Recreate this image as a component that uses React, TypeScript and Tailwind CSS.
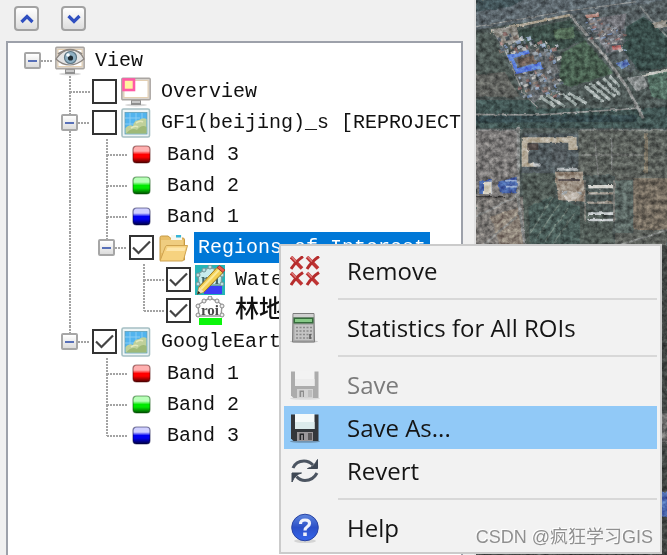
import React, { useState } from 'react';
import clsx from 'clsx';

type IconName = 'view' | 'overview' | 'raster' | 'red' | 'green' | 'blue' | 'folder' | 'roiEdit' | 'roi';

interface TreeNode {
  id: string;
  label: string;
  icon: IconName;
  checked?: boolean;
  selected?: boolean;
  children?: TreeNode[];
}

const tree: TreeNode = {
  id: 'view',
  label: 'View',
  icon: 'view',
  children: [
    { id: 'overview', label: 'Overview', icon: 'overview', checked: false },
    {
      id: 'gf1',
      label: 'GF1(beijing)_s [REPROJECTED]',
      icon: 'raster',
      checked: false,
      children: [
        { id: 'gf1-b3', label: 'Band 3', icon: 'red' },
        { id: 'gf1-b2', label: 'Band 2', icon: 'green' },
        { id: 'gf1-b1', label: 'Band 1', icon: 'blue' },
        {
          id: 'regions',
          label: 'Regions of Interest',
          icon: 'folder',
          checked: true,
          selected: true,
          children: [
            { id: 'water', label: 'Water', icon: 'roiEdit', checked: true },
            { id: 'forest', label: '林地', icon: 'roi', checked: true },
          ],
        },
      ],
    },
    {
      id: 'google',
      label: 'GoogleEarth',
      icon: 'raster',
      checked: true,
      children: [
        { id: 'ge-b1', label: 'Band 1', icon: 'red' },
        { id: 'ge-b2', label: 'Band 2', icon: 'green' },
        { id: 'ge-b3', label: 'Band 3', icon: 'blue' },
      ],
    },
  ],
};

const vDots = 'w-0.5 bg-[repeating-linear-gradient(to_bottom,#a3a3a3_0_2px,transparent_2px_3px)]';
const hDots = 'h-0.5 bg-[repeating-linear-gradient(to_right,#a3a3a3_0_2px,transparent_2px_3px)]';

const bandColors = {
  red: ['#ffb0b0', '#ff0000', '#4a0000'],
  green: ['#b8ffb8', '#00e800', '#004a00'],
  blue: ['#d0d0ff', '#0000f0', '#00003c'],
};

const BandIcon: React.FC<{ color: 'red' | 'green' | 'blue' }> = ({ color }) => {
  const [light, mid, dark] = bandColors[color];
  return (
    <svg className="ml-[3px] size-[19px]" viewBox="0 0 19 19">
      <defs>
        <linearGradient id={`band-${color}`} x1="0" y1="0" x2="0" y2="1">
          <stop offset="0" stopColor={light} />
          <stop offset="0.3" stopColor={light} />
          <stop offset="0.5" stopColor={mid} />
          <stop offset="0.65" stopColor={mid} />
          <stop offset="1" stopColor={dark} />
        </linearGradient>
      </defs>
      <rect x="1" y="1" width="17" height="17" rx="3.5" fill={`url(#band-${color})`} stroke={dark} strokeOpacity="0.5" strokeWidth="1.2" />
    </svg>
  );
};

const Monitor: React.FC<{ children: React.ReactNode }> = ({ children }) => (
  <svg className="size-[30px]" viewBox="0 0 30 30">
    <ellipse cx="15" cy="28" rx="11" ry="1.5" fill="#d8d8d8" />
    <rect x="10" y="22" width="10" height="6" fill="#8f8f8f" />
    <rect x="11" y="24" width="8" height="2" fill="#c9c9c9" />
    <rect x="0.8" y="1.3" width="28.4" height="21.4" rx="1" fill="#d9d3cc" stroke="#a9a5a1" strokeWidth="1.4" />
    <rect x="3" y="3.5" width="24" height="17" fill="#fff" stroke="#e3cfb2" />
    {children}
  </svg>
);

const RoiShape: React.FC = () => (
  <>
    <path d="M9 5L15 2L22 5L27 9L26 20H4L3 9Z" fill="#fff" stroke="#999" strokeWidth="1.4" />
    {[[9, 5], [15, 2], [22, 5], [27, 10], [3, 10], [3, 19], [27, 19]].map(([cx, cy]) => (
      <circle key={`${cx}-${cy}`} cx={cx} cy={cy} r="2" fill="#eee" stroke="#888" />
    ))}
    <text x="15" y="19" textAnchor="middle" fontFamily="Liberation Serif, serif" fontWeight="bold" fontSize="15" fill="#4a4a4a">roi</text>
  </>
);

const NodeIcon: React.FC<{ name: IconName }> = ({ name }) => {
  switch (name) {
    case 'red':
    case 'green':
    case 'blue':
      return <BandIcon color={name} />;
    case 'view':
      return (
        <Monitor>
          <path d="M1 13Q8 3 16 4Q25 4 29 13Q22 19 15 19Q7 19 1 13Z" fill="#e4e4e4" stroke="#8b8580" strokeWidth="1.2" />
          <path d="M3 8Q15 -1 27 8" fill="none" stroke="#8b8580" strokeWidth="1.6" />
          <circle cx="15.5" cy="11.5" r="6" fill="#8fb0c3" stroke="#5d7785" strokeWidth="1.2" />
          <circle cx="15.5" cy="12" r="2.6" fill="#1d2b33" />
          <circle cx="13" cy="9" r="1.8" fill="#f4fbff" />
        </Monitor>
      );
    case 'overview':
      return (
        <Monitor>
          <rect x="2.5" y="2.5" width="10.5" height="10.5" fill="#fff3a0" stroke="#ff5aa5" strokeWidth="2.6" />
        </Monitor>
      );
    case 'raster':
      return (
        <svg className="size-[30px]" viewBox="0 0 30 30">
          <rect x="1" y="1" width="27.5" height="28" rx="1.5" fill="#eef5f6" stroke="#a5bfc3" strokeWidth="1.6" />
          <rect x="4" y="4.5" width="22" height="21.5" fill="#52b4ee" stroke="#5f9fb8" strokeWidth="0.8" />
          <path d="M9 5V18M15 5V14M21 5V11M4 10H19M4 16H14" stroke="#8fd0f5" strokeWidth="0.9" />
          <path d="M4.500 20Q8 16 12 18Q13 12 18 12Q22 9 25.500 11V25.500H4.500Z" fill="#bfd09a" />
          <path d="M5 25.500Q11 19 16 22Q21 16 25.500 19V25.500Z" fill="#9fb978" />
          <path d="M15 15Q19 12 22 14M10 20Q14 17 17 19" stroke="#e3e8bd" strokeWidth="1.6" fill="none" />
        </svg>
      );
    case 'folder':
      return (
        <svg className="size-[30px]" viewBox="0 0 30 30">
          <path d="M2 27V4.500Q2 3 3.500 3H10L12.500 5H25Q26.500 5 26.500 7V27Z" fill="#e9bf68" stroke="#c69a45" />
          <path d="M13 2H24V7H13Z" fill="#f6f6ee" />
          <path d="M18 2H23V4.500H18Z" fill="#35b5d8" />
          <path d="M3 7H25V20H3Z" fill="#efcd80" />
          <path d="M2 28L7.500 13.500Q8 12.500 9 12.500H29.500L25.500 27Q25 28 24 28Z" fill="#f6d27f" stroke="#cfa350" />
          <path d="M9.500 14.500H27.500L26.500 18H8Z" fill="#fde6ab" />
        </svg>
      );
    case 'roiEdit':
      return (
        <svg className="size-[30px]" viewBox="0 0 30 30">
          <rect width="30" height="30" fill="#26b5b8" />
          <g opacity="0.75">
            <RoiShape />
          </g>
          <rect x="9" y="21" width="18" height="8" fill="#3d3df5" />
          <path d="M4 22L22 2.500L28 7.500L9 27L2.500 29Z" fill="#f3cf52" stroke="#9b7a22" />
          <path d="M6 24L24 5" stroke="#fbea9b" strokeWidth="2" />
          <path d="M22 2.500L24.500 0.500L30 5L28 7.500Z" fill="#ef5848" stroke="#a03028" strokeWidth="0.8" />
          <path d="M4 22L9 27L2.500 29Z" fill="#f3e2bd" />
          <path d="M3.300 26L5.500 28L2 29.500Z" fill="#222" />
        </svg>
      );
    case 'roi':
      return (
        <svg className="size-[30px]" viewBox="0 0 30 30">
          <RoiShape />
          <rect x="4" y="22" width="23" height="7" fill="#0cf50c" />
        </svg>
      );
  }
};

const TreeItem: React.FC<{ node: TreeNode; depth: number; guides: boolean[]; last: boolean }> = ({ node, depth, guides, last }) => {
  const [open, setOpen] = useState(true);
  const [checked, setChecked] = useState(!!node.checked);
  const hasBox = node.checked !== undefined;
  const isBand = !hasBox && depth > 0;

  return (
    <li>
      <div className="flex h-[31px] items-center whitespace-nowrap">
        {guides.map((line, i) => (
          <span key={i} className="flex w-[37px] shrink-0 self-stretch pl-2">
            {line && <span className={vDots} />}
          </span>
        ))}

        {/* Connector to the parent, with the expander on it */}
        <span className="flex w-[31px] shrink-0 items-center self-stretch pr-0.5">
          <span className="flex w-[17px] shrink-0 flex-col items-center self-stretch">
            <span className={clsx('flex-1', depth > 0 && vDots)} />
            {node.children && (
              <button
                type="button"
                aria-label={open ? `Collapse ${node.label}` : `Expand ${node.label}`}
                className="grid size-[17px] place-items-center rounded-xs border-2 border-[#a6a6a6] bg-linear-to-b from-white to-[#dcdcdc]"
                onClick={() => setOpen(!open)}
              >
                <span className="h-0.5 w-[9px] bg-[#5870b8]" />
              </button>
            )}
            <span className={clsx('flex-1', depth > 0 && !last && vDots)} />
          </span>
          <span className={clsx('flex-1', hDots, !node.children && '-ml-2')} />
        </span>

        {hasBox && (
          <span className="mr-1 grid size-[25px] shrink-0">
            <input
              id={node.id}
              type="checkbox"
              checked={checked}
              onChange={(e) => setChecked(e.target.checked)}
              className="peer size-[25px] appearance-none border-2 border-[#333] bg-white [grid-area:1/1]"
            />
            <svg className="pointer-events-none hidden size-[25px] peer-checked:block [grid-area:1/1]" viewBox="0 0 25 25" fill="none" stroke="#444" strokeWidth="2.2">
              <path d="M4 12.500L9.500 18L21 6.500" />
            </svg>
          </span>
        )}

        <span className={clsx('shrink-0', isBand ? 'w-7' : 'w-[30px]')}>
          <NodeIcon name={node.icon} />
        </span>

        <label
          htmlFor={hasBox ? node.id : undefined}
          className={clsx('ml-1.5 flex h-full items-center px-1', node.selected && 'bg-[#0078d7] text-white', node.id === 'forest' && 'text-2xl font-medium')}
        >
          {node.label}
        </label>
      </div>

      {node.children && open && (
        <ul className={clsx(depth > 0 && 'pt-px')}>
          {node.children.map((child, i) => (
            <TreeItem
              key={child.id}
              node={child}
              depth={depth + 1}
              guides={[...guides, depth > 0 && !last]}
              last={i === node.children!.length - 1}
            />
          ))}
        </ul>
      )}
    </li>
  );
};

const RemoveIcon: React.FC = () => (
  <svg className="size-[30px]" viewBox="0 0 30 30" fill="none">
    {[[0, 0], [16, 0], [0, 16], [16, 16]].map(([x, y]) => (
      <g key={`${x}-${y}`} transform={`translate(${x} ${y})`}>
        <path d="M1 1L12 12.500" stroke="#bf3434" strokeWidth="3.6" />
        <path d="M13 0.500Q6 5 1 13" stroke="#b52c2c" strokeWidth="3" />
        <path d="M1.500 0.500L6 5.500" stroke="#dc7c7c" strokeWidth="1.4" />
      </g>
    ))}
  </svg>
);

const CalculatorIcon: React.FC = () => (
  <svg className="size-[30px]" viewBox="0 0 30 30">
    <ellipse cx="14" cy="28.500" rx="14" ry="1.500" fill="#c8c8c8" />
    <path d="M3 0.500H24L24.500 29H2.500Z" fill="#a9a9a9" stroke="#7c7c7c" />
    <rect x="3.500" y="1" width="20" height="3" fill="#d0d0d0" />
    <rect x="3.500" y="4.500" width="20" height="6" fill="#356b3b" />
    <rect x="5" y="6" width="17" height="3" fill="#86c986" />
    <rect x="4.500" y="12" width="18.500" height="15" fill="#c4c4c4" />
    <path d="M6 14.500H22M6 18H22M6 21.500H22M6 25H22" stroke="#8a8a8a" strokeWidth="1.500" strokeDasharray="2 1.500" />
    <path d="M20 21V26" stroke="#555" strokeWidth="1.500" />
  </svg>
);

const FloppyIcon: React.FC<{ faded?: boolean }> = ({ faded }) => (
  <svg className="size-[30px]" viewBox="0 0 30 30">
    <ellipse cx="15" cy="28.500" rx="15" ry="1.300" fill={faded ? '#dcdcdc' : '#6f94b3'} />
    <path d="M1 1.500H28.500V28H3.500L1 25.500Z" fill={faded ? '#acacac' : '#33373b'} />
    <path d="M5 1H24.500V16H5Z" fill={faded ? '#f3f3f3' : '#f4fafa'} />
    <path d="M5 9H24.500V16H5Z" fill={faded ? '#ececec' : '#dcebec'} />
    <path d="M7 19H23V28H7Z" fill={faded ? '#d3d3d3' : '#9b989b'} />
    <path d="M9.500 20.500H14V27H9.500Z" fill={faded ? '#8d8d8d' : '#26282a'} />
    <path d="M11 22H13V27H11Z" fill={faded ? '#c4c4c4' : '#8b888b'} />
    <path d="M18 20H22V27H18Z" fill={faded ? '#bfbfbf' : '#5c5a5c'} />
  </svg>
);

const RevertIcon: React.FC = () => (
  <svg className="size-[30px]" viewBox="0 0 30 30">
    <g fill="none" stroke="#4c5561" strokeWidth="3">
      <path d="M3 12Q6 5 14 5Q19 5 23 9" />
      <path d="M27 17Q23 24.500 15 24.500Q10 24.500 6.500 20.500" />
    </g>
    <path d="M27.500 3.500V12.500H17.500Q24 11 27.500 3.500Z" fill="#3f4854" stroke="#3f4854" />
    <path d="M2 26V17H11.500Q5 18.500 2 26Z" fill="#3f4854" stroke="#3f4854" />
  </svg>
);

const HelpIcon: React.FC = () => (
  <svg className="size-[30px]" viewBox="0 0 30 30">
    <defs>
      <linearGradient id="help" x1="0" y1="0" x2="0" y2="1">
        <stop offset="0" stopColor="#5f86dd" />
        <stop offset="0.5" stopColor="#2c50c8" />
        <stop offset="1" stopColor="#3566ec" />
      </linearGradient>
    </defs>
    <ellipse cx="15" cy="28" rx="11" ry="2" fill="#d4d4d4" />
    <circle cx="15" cy="14.500" r="13.300" fill="url(#help)" stroke="#2a44a4" />
    <path d="M10.500 11Q10.500 7 15 7Q19.500 7 19.500 10.500Q19.500 12.500 17 14Q15 15.200 15 17.500" fill="none" stroke="#f0f2fb" strokeWidth="3.200" />
    <rect x="13.200" y="19.500" width="3.600" height="3.500" fill="#f0f2fb" />
  </svg>
);

interface MenuEntry {
  label: string;
  icon: React.ReactNode;
  disabled?: boolean;
  active?: boolean;
}

const menuGroups: MenuEntry[][] = [
  [{ label: 'Remove', icon: <RemoveIcon /> }],
  [{ label: 'Statistics for All ROIs', icon: <CalculatorIcon /> }],
  [
    { label: 'Save', icon: <FloppyIcon faded />, disabled: true },
    { label: 'Save As...', icon: <FloppyIcon />, active: true },
    { label: 'Revert', icon: <RevertIcon /> },
  ],
  [{ label: 'Help', icon: <HelpIcon /> }],
];

const ContextMenu: React.FC = () => (
  <div
    role="menu"
    className="absolute top-[244px] left-[279px] w-[383px] border-2 border-[#cbcbcb] bg-[#f2f2f2] p-[3px] font-['Open_Sans','Noto_Sans',sans-serif] text-2xl leading-[42px] text-[#151515]"
  >
    {menuGroups.map((group, i) => (
      <React.Fragment key={i}>
        {i > 0 && (
          <div role="separator" className="flex h-3.5 items-center pl-[54px]">
            <span className="h-0.5 flex-1 bg-[#d8d8d8]" />
          </div>
        )}
        {group.map((item) => (
          <button
            key={item.label}
            type="button"
            role="menuitem"
            disabled={item.disabled}
            className={clsx(
              'flex h-[43px] w-full items-center gap-[27px] pl-1.5 text-left hover:bg-[#91c9f7] disabled:text-[#7b7b7b]',
              item.active && 'bg-[#91c9f7]'
            )}
          >
            {item.icon}
            {item.label}
          </button>
        ))}
      </React.Fragment>
    ))}
  </div>
);

const SatelliteMap: React.FC = () => (
  <svg className="h-full w-full" viewBox="18 0 573 1665" preserveAspectRatio="xMinYMin slice">
    <defs>
      <filter id="terrain" x="0" y="0" width="100%" height="100%" colorInterpolationFilters="sRGB">
        <feTurbulence type="fractalNoise" baseFrequency="0.07" numOctaves="3" seed="11" />
        <feColorMatrix values="1.4 0 0 0 -0.18  1.4 0 0 0 -0.17  1.4 0 0 0 -0.15  0 0 0 0 1" />
      </filter>
      <filter id="rough" colorInterpolationFilters="sRGB">
        <feTurbulence type="fractalNoise" baseFrequency="0.06" numOctaves="2" seed="3" />
        <feDisplacementMap in="SourceGraphic" scale="8" xChannelSelector="R" yChannelSelector="G" />
        <feGaussianBlur stdDeviation="1" />
      </filter>
    </defs>
    <rect x="18" width="573" height="1665" fill="#4c5552" />
    <g filter="url(#rough)">
      {/* Fields and woods */}
      <path d="M18 0H591V20L300 45L18 90Z" fill="#596266" />
      <path d="M18 0H160L120 20L18 35Z" fill="#405053" />
      <path d="M18 100L70 95L150 290H18Z" fill="#4c5651" />
      <path d="M18 225L105 215L150 290H18Z" fill="#5d5e59" />
      <path d="M145 90L300 60L345 120L265 150L150 125Z" fill="#3c4d46" />
      <path d="M250 90L310 80L315 115L255 120Z" fill="#4f6450" />
      <path d="M275 160L345 120L430 220L300 260L268 250Z" fill="#465b4b" />
      <path d="M300 45L591 0V130L480 220L400 170Z" fill="#535b5c" />
      <path d="M470 80L520 50L591 100V200L510 215L460 150Z" fill="#384b47" />
      <path d="M530 220L591 208V300L545 290Z" fill="#526b5e" />
      <path d="M18 300L190 300L210 325L500 325L591 320V385H18Z" fill="#40524f" />
      <path d="M18 348L500 345V365L18 368Z" fill="#344648" />
      <path d="M18 390H145V590H18Z" fill="#75726f" />
      <path d="M18 590H165V735H18Z" fill="#77736e" />
      <path d="M60 650L150 620L165 735H90Z" fill="#887d71" />
      <path d="M155 500H260L255 600L340 620L430 660V735H165Z" fill="#4e5751" />
      <path d="M175 620L240 590L330 620V735H180Z" fill="#475853" />
      <path d="M325 390H591V525H325Z" fill="#595d57" />
      <path d="M435 525H591V735H435Z" fill="#5c5f59" />
      <path d="M155 400H325V520H155Z" fill="#50585a" />
      <path d="M435 540H490V700H435Z" fill="#57625d" />
      <path d="M490 535H591V690H490Z" fill="#70675a" />
      <path d="M18 735H591V1665H18Z" fill="#404340" />
      {/* Roads */}
      <g fill="none" stroke="#858683">
        <path d="M300 45L410 175L470 260L520 355" strokeWidth="9" />
        <path d="M60 95L300 45" stroke="#aaa08d" strokeWidth="7" />
        <path d="M18 80L300 32L500 5" strokeWidth="3" />
        <path d="M70 95L105 150L160 280L205 325" strokeWidth="4" />
        <path d="M145 380V600L165 735" strokeWidth="9" />
        <path d="M18 343L200 345L500 325" strokeWidth="5" />
        <path d="M18 390H145M325 390H591M335 465H530M375 420L385 530M425 410V510" strokeWidth="4" strokeOpacity="0.6" />
        <path d="M510 20L591 110M18 650L140 590M40 735L140 650M450 735L591 690" strokeWidth="6" strokeOpacity="0.7" />
        <path d="M515 228L591 210" stroke="#b9b9b0" strokeWidth="8" />
        <path d="M528 400V520" stroke="#766f5f" strokeWidth="12" />
        <path d="M105 590H18" stroke="#3c3a38" strokeWidth="4" />
      </g>
      {/* Crop rows */}
      <path d="M180 700Q220 640 250 590M200 715Q240 650 270 610M225 725Q260 670 295 625M250 730Q285 680 315 640" fill="none" stroke="#65726a" strokeWidth="4" />
      {/* Bare ground and yards */}
      <path d="M60 88L140 78L150 125L100 130Z" fill="#8a877f" />
      <path d="M120 155L170 145L255 160L270 250L190 310L140 230Z" fill="#646768" />
      <path d="M350 60L470 40L450 150L410 160Z" fill="#6d6d70" />
      <path d="M155 412H320V450H295V428H175V490L200 492V500H155Z" fill="#b5ab98" />
      <path d="M255 515H340L345 605L265 600Z" fill="#96897a" />
      <path d="M245 430H290V500H245Z" fill="#515759" />
      <path d="M172 430H205V450H172Z" fill="#4b4340" />
      {/* Scattered village houses */}
      {Array.from({ length: 150 }, (_, i) => {
        const zone = i % 3;
        const a = (i * 61) % 100;
        const b = (i * 37 + a * 13) % 100;
        const x = zone === 0 ? 345 + a * 1.2 : zone === 1 ? 140 + a * 1.3 : 80 + a * 1.8;
        const y = zone === 0 ? 45 + b * 0.7 + a * 0.5 : zone === 1 ? 215 + b * 0.8 : 95 + b * 0.6 + a * 0.35;
        const fill = ['#969da3', '#8799b3', '#7f7269', '#aeaeaa', '#444d50', '#8b6c68', '#5f6971'][i % 7];
        return <rect key={i} x={x} y={y} width={6 + (i % 4) * 3} height={5 + (i % 3) * 3} fill={fill} transform={`rotate(-18 ${x} ${y})`} />;
      })}
      {/* Roofs */}
      <path d="M110 165L175 150L180 160L130 175L145 205L210 185L218 205L140 222Z" fill="#5b7bd6" />
      <path d="M140 180L190 165L200 185L150 200Z" fill="#66584f" />
      <path d="M28 540H65V582H28ZM85 545L140 530V580H90Z" fill="#4661a3" />
      <path d="M42 545H65V582H42Z" fill="#ccc6b4" />
      <path d="M102 542H140M105 560H142" stroke="#9aaed2" strokeWidth="5" />
      <path d="M355 560H430" stroke="#d3d1ca" strokeWidth="10" />
      <path d="M355 580H430M355 608H430" stroke="#968d81" strokeWidth="7" />
      <path d="M355 641H430M355 660H430" stroke="#c9cdce" strokeWidth="8" />
      <path d="M345 540V665M432 540V665" stroke="#7d7972" strokeWidth="4" />
      <path d="M260 508H325M275 580H335M190 495H212" stroke="#aeb2b3" strokeWidth="9" />
      <path d="M265 540H330" stroke="#544c4b" strokeWidth="6" />
      <path d="M282 585Q300 565 330 580Q325 605 290 605Z" fill="#bcb3a7" />
      <path d="M210 290L255 320M230 285L285 320M275 280L320 315M295 280L350 310M345 260L400 305M360 250L420 300M380 245L435 290M400 235L450 285M420 230L450 260" stroke="#9fa9a5" strokeWidth="9" />
      <path d="M470 235L520 225L535 260L500 275Z" fill="#878b89" />
      <path d="M345 45L385 40L388 50L350 55Z" fill="#b89288" />
      <path d="M425 138L452 135L455 148L430 150Z" fill="#b06866" />
      <path d="M440 190L470 178L480 195L455 208Z" fill="#6480b5" />
      <path d="M545 70L591 60V80L555 85Z" fill="#938e84" />
      <path d="M565 1475H591V1550H565Z" fill="#4b66ac" />
      <path d="M565 1240H591V1330H565Z" fill="#6c6b68" />
    </g>
    <rect x="18" width="573" height="1665" filter="url(#terrain)" className="opacity-45 mix-blend-overlay" />
  </svg>
);

const MoveButton: React.FC<{ label: string; path: string }> = ({ label, path }) => (
  <button
    type="button"
    aria-label={label}
    className="grid size-[25px] place-items-center rounded-sm border-2 border-[#a2a2a2] bg-linear-to-b from-white to-[#dedede]"
  >
    <svg className="size-4" viewBox="0 0 16 16" fill="none" stroke="#2f4fc0" strokeWidth="3.2">
      <path d={path} />
    </svg>
  </button>
);

const App: React.FC = () => {
  return (
    <div className="relative flex h-screen overflow-hidden bg-[#f0f0f0]">
      {/* Layer manager */}
      <div className="flex w-5/7 flex-col border-r-2 border-[#e2e2e2] pr-[11px] pl-1.5">
        <div className="flex h-[41px] shrink-0 items-start gap-[22px] pt-1.5 pl-2">
          <MoveButton label="Move layer up" path="M2.500 11L8 5.500L13.500 11" />
          <MoveButton label="Move layer down" path="M2.500 5L8 10.500L13.500 5" />
        </div>
        <div className="flex-1 overflow-hidden border-2 border-b-0 border-[#9da1aa] bg-white pt-0.5 pl-4 font-['Liberation_Mono','Noto_Sans_CJK_SC',monospace] text-xl text-[#111]">
          <ul>
            <TreeItem node={tree} depth={0} guides={[]} last />
          </ul>
        </div>
      </div>

      {/* Map */}
      <div className="min-w-0 flex-1">
        <SatelliteMap />
      </div>

      <ContextMenu />

      <p className="pointer-events-none absolute right-3.5 bottom-1.5 font-['Liberation_Sans','Noto_Sans_CJK_SC',sans-serif] text-lg leading-6 text-[#8f8f8f] [text-shadow:-1px_-1px_0_#fff]">
        CSDN @疯狂学习GIS
      </p>
    </div>
  );
};

export default App;
